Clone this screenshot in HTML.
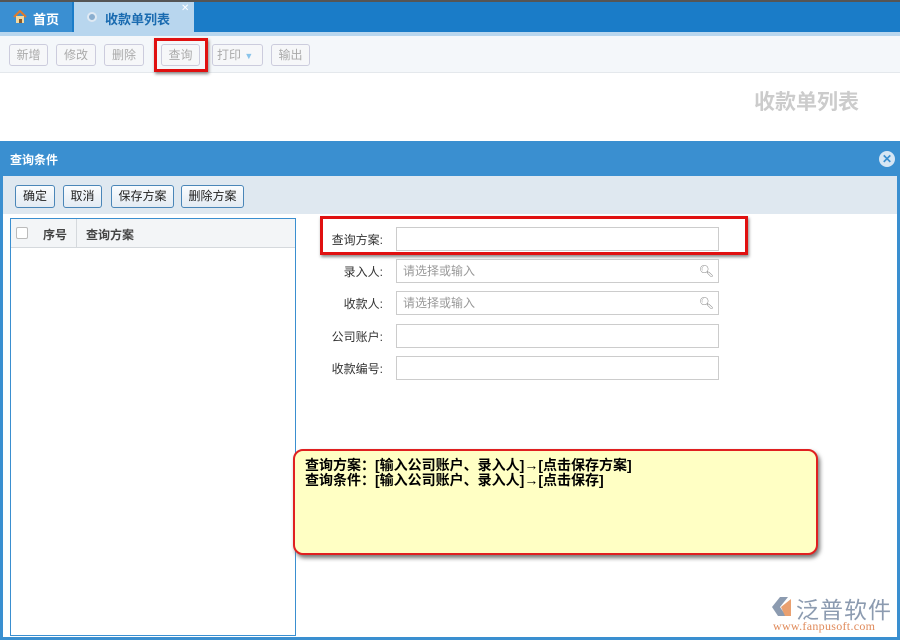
<!DOCTYPE html>
<html><head><meta charset="utf-8"><style>
*{margin:0;padding:0;box-sizing:border-box}
body{width:900px;height:640px;overflow:hidden;background:#fff;font-family:"Liberation Sans","Noto Sans CJK SC",sans-serif;font-size:12px;position:relative}
.a{position:absolute}
.tb{border:1px solid #ccd;border-radius:3px;background:#f6f7f9;color:#aaa;height:22px;line-height:20px;text-align:center;font-size:12px}
.db{border:1px solid #4a86b8;border-radius:3px;background:linear-gradient(#fafcfe,#e3ebf3);color:#222;height:23px;line-height:21px;text-align:center}
.lbl{text-align:right;width:80px;color:#333;font-size:12px}
.inp{border:1px solid #ccc;height:24px;width:323px;left:396px;background:#fff;color:#999;line-height:22px;padding-left:6px}
</style></head><body>
<div class="a" style="left:0;top:0;width:900px;height:2px;background:#555"></div>
<div class="a" style="left:0;top:2px;width:900px;height:30px;background:#1a7cc8"></div>
<div class="a" style="left:0;top:2px;width:72px;height:30px;background:#3a8fd2"></div>
<div class="a" style="left:13px;top:10px;width:13px;height:13px;"><svg width="14" height="13"><path d="M1 7 L7 1 L13 7" fill="none" stroke="#e07a2a" stroke-width="2"/><rect x="3" y="6" width="8" height="7" fill="#f3d9a0"/><rect x="6" y="9" width="3" height="4" fill="#8a5a2a"/></svg></div>
<div class="a" style="left:33px;top:9px;color:#fff;font-weight:bold;font-size:13px">首页</div>
<div class="a" style="left:74px;top:2px;width:120px;height:31px;background:#b8d6ee"></div>
<div class="a" style="left:87px;top:12px;width:10px;height:10px;border-radius:50%;background:#8aaecf;border:2px solid #dfe9f3"></div>
<div class="a" style="left:105px;top:9px;color:#1a6bb0;font-weight:bold;font-size:13px">收款单列表</div>
<div class="a" style="left:181px;top:3px;color:#fff;font-size:10px">✕</div>
<div class="a" style="left:0;top:32px;width:900px;height:4px;background:#b8d6ee"></div>
<div class="a" style="left:0;top:36px;width:900px;height:37px;background:#f4f7fa;border-bottom:1px solid #e4e8ec"></div>
<div class="a tb" style="left:9px;top:44px;width:39px">新增</div>
<div class="a tb" style="left:56px;top:44px;width:40px">修改</div>
<div class="a tb" style="left:104px;top:44px;width:40px">删除</div>
<div class="a tb" style="left:161px;top:44px;width:39px">查询</div>
<div class="a" style="left:154px;top:38px;width:54px;height:34px;border:3px solid #e01010;box-shadow:1px 2px 3px #888"></div>
<div class="a tb" style="left:212px;top:44px;width:51px;text-align:left;padding-left:4px">打印 <span style="color:#8ac4ea;font-size:9px">▼</span></div>
<div class="a tb" style="left:271px;top:44px;width:39px">输出</div>
<div class="a" style="left:754px;top:86px;color:#ccc;font-weight:bold;font-size:21px">收款单列表</div>
<div class="a" style="left:0;top:141px;width:900px;height:499px;background:#3a8fd0"></div>
<div class="a" style="left:10px;top:151px;color:#fff;font-weight:bold;font-size:12px">查询条件</div>
<div class="a" style="left:879px;top:151px;width:16px;height:16px;border-radius:50%;background:#d6e6f4;color:#3a8fd0;font-size:12px;line-height:16px;text-align:center;font-weight:bold">✕</div>
<div class="a" style="left:3px;top:176px;width:894px;height:461px;background:#fff"></div>
<div class="a" style="left:3px;top:176px;width:894px;height:38px;background:#dfe8f0"></div>
<div class="a db" style="left:15px;top:185px;width:40px">确定</div>
<div class="a db" style="left:63px;top:185px;width:39px">取消</div>
<div class="a db" style="left:111px;top:185px;width:63px">保存方案</div>
<div class="a db" style="left:181px;top:185px;width:63px">删除方案</div>
<div class="a" style="left:10px;top:218px;width:286px;height:418px;border:1px solid #3a8fd0"></div>
<div class="a" style="left:11px;top:219px;width:284px;height:29px;background:#f3f5f7;border-bottom:1px solid #d5d9dd"></div>
<div class="a" style="left:16px;top:227px;width:12px;height:12px;border:1px solid #bbb;border-radius:2px;background:#fff"></div>
<div class="a" style="left:76px;top:219px;width:1px;height:29px;background:#d5d9dd"></div>
<div class="a" style="left:43px;top:226px;color:#444;font-weight:bold;font-size:12px">序号</div>
<div class="a" style="left:86px;top:226px;color:#444;font-weight:bold;font-size:12px">查询方案</div>
<div class="a lbl" style="left:303px;top:231px">查询方案:</div>
<div class="a inp" style="top:227px"></div>
<div class="a" style="left:320px;top:216px;width:428px;height:39px;border:3px solid #e01010;box-shadow:1px 2px 3px #888"></div>
<div class="a lbl" style="left:303px;top:263px">录入人:</div>
<div class="a inp" style="top:259px">请选择或输入<span style="position:absolute;right:4px;top:0;color:#888">🔍︎</span></div>
<div class="a lbl" style="left:303px;top:295px">收款人:</div>
<div class="a inp" style="top:291px">请选择或输入<span style="position:absolute;right:4px;top:0;color:#888">🔍︎</span></div>
<div class="a lbl" style="left:303px;top:328px">公司账户:</div>
<div class="a inp" style="top:324px"></div>
<div class="a lbl" style="left:303px;top:360px">收款编号:</div>
<div class="a inp" style="top:356px"></div>
<div class="a" style="left:293px;top:449px;width:525px;height:106px;background:#ffffc4;border:2px solid #e02020;border-radius:10px;box-shadow:2px 3px 4px #777;padding:7px 10px;font-family:'Liberation Sans','Noto Sans CJK SC',sans-serif;font-size:14px;line-height:15px;color:#000;font-weight:bold">查询方案：[输入公司账户、录入人]→[点击保存方案]<br>查询条件：[输入公司账户、录入人]→[点击保存]</div>
<div class="a" style="left:770px;top:595px;width:24px;height:24px"><svg width="24" height="24"><path d="M2 12 L10 2 L18 2 L10 12 L16 21 L8 21 Z" fill="#8c9bb0"/><path d="M11 12 L21 4 L21 21 L15 21 Z" fill="#e9a070"/></svg></div>
<div class="a" style="left:796px;top:591px;color:#8c9bb0;font-size:23px;letter-spacing:1px">泛普软件</div>
<div class="a" style="left:773px;top:619px;color:#e08a5a;font-family:'Liberation Serif',serif;font-size:12px;letter-spacing:0.3px">www.fanpusoft.com</div>
</body></html>
